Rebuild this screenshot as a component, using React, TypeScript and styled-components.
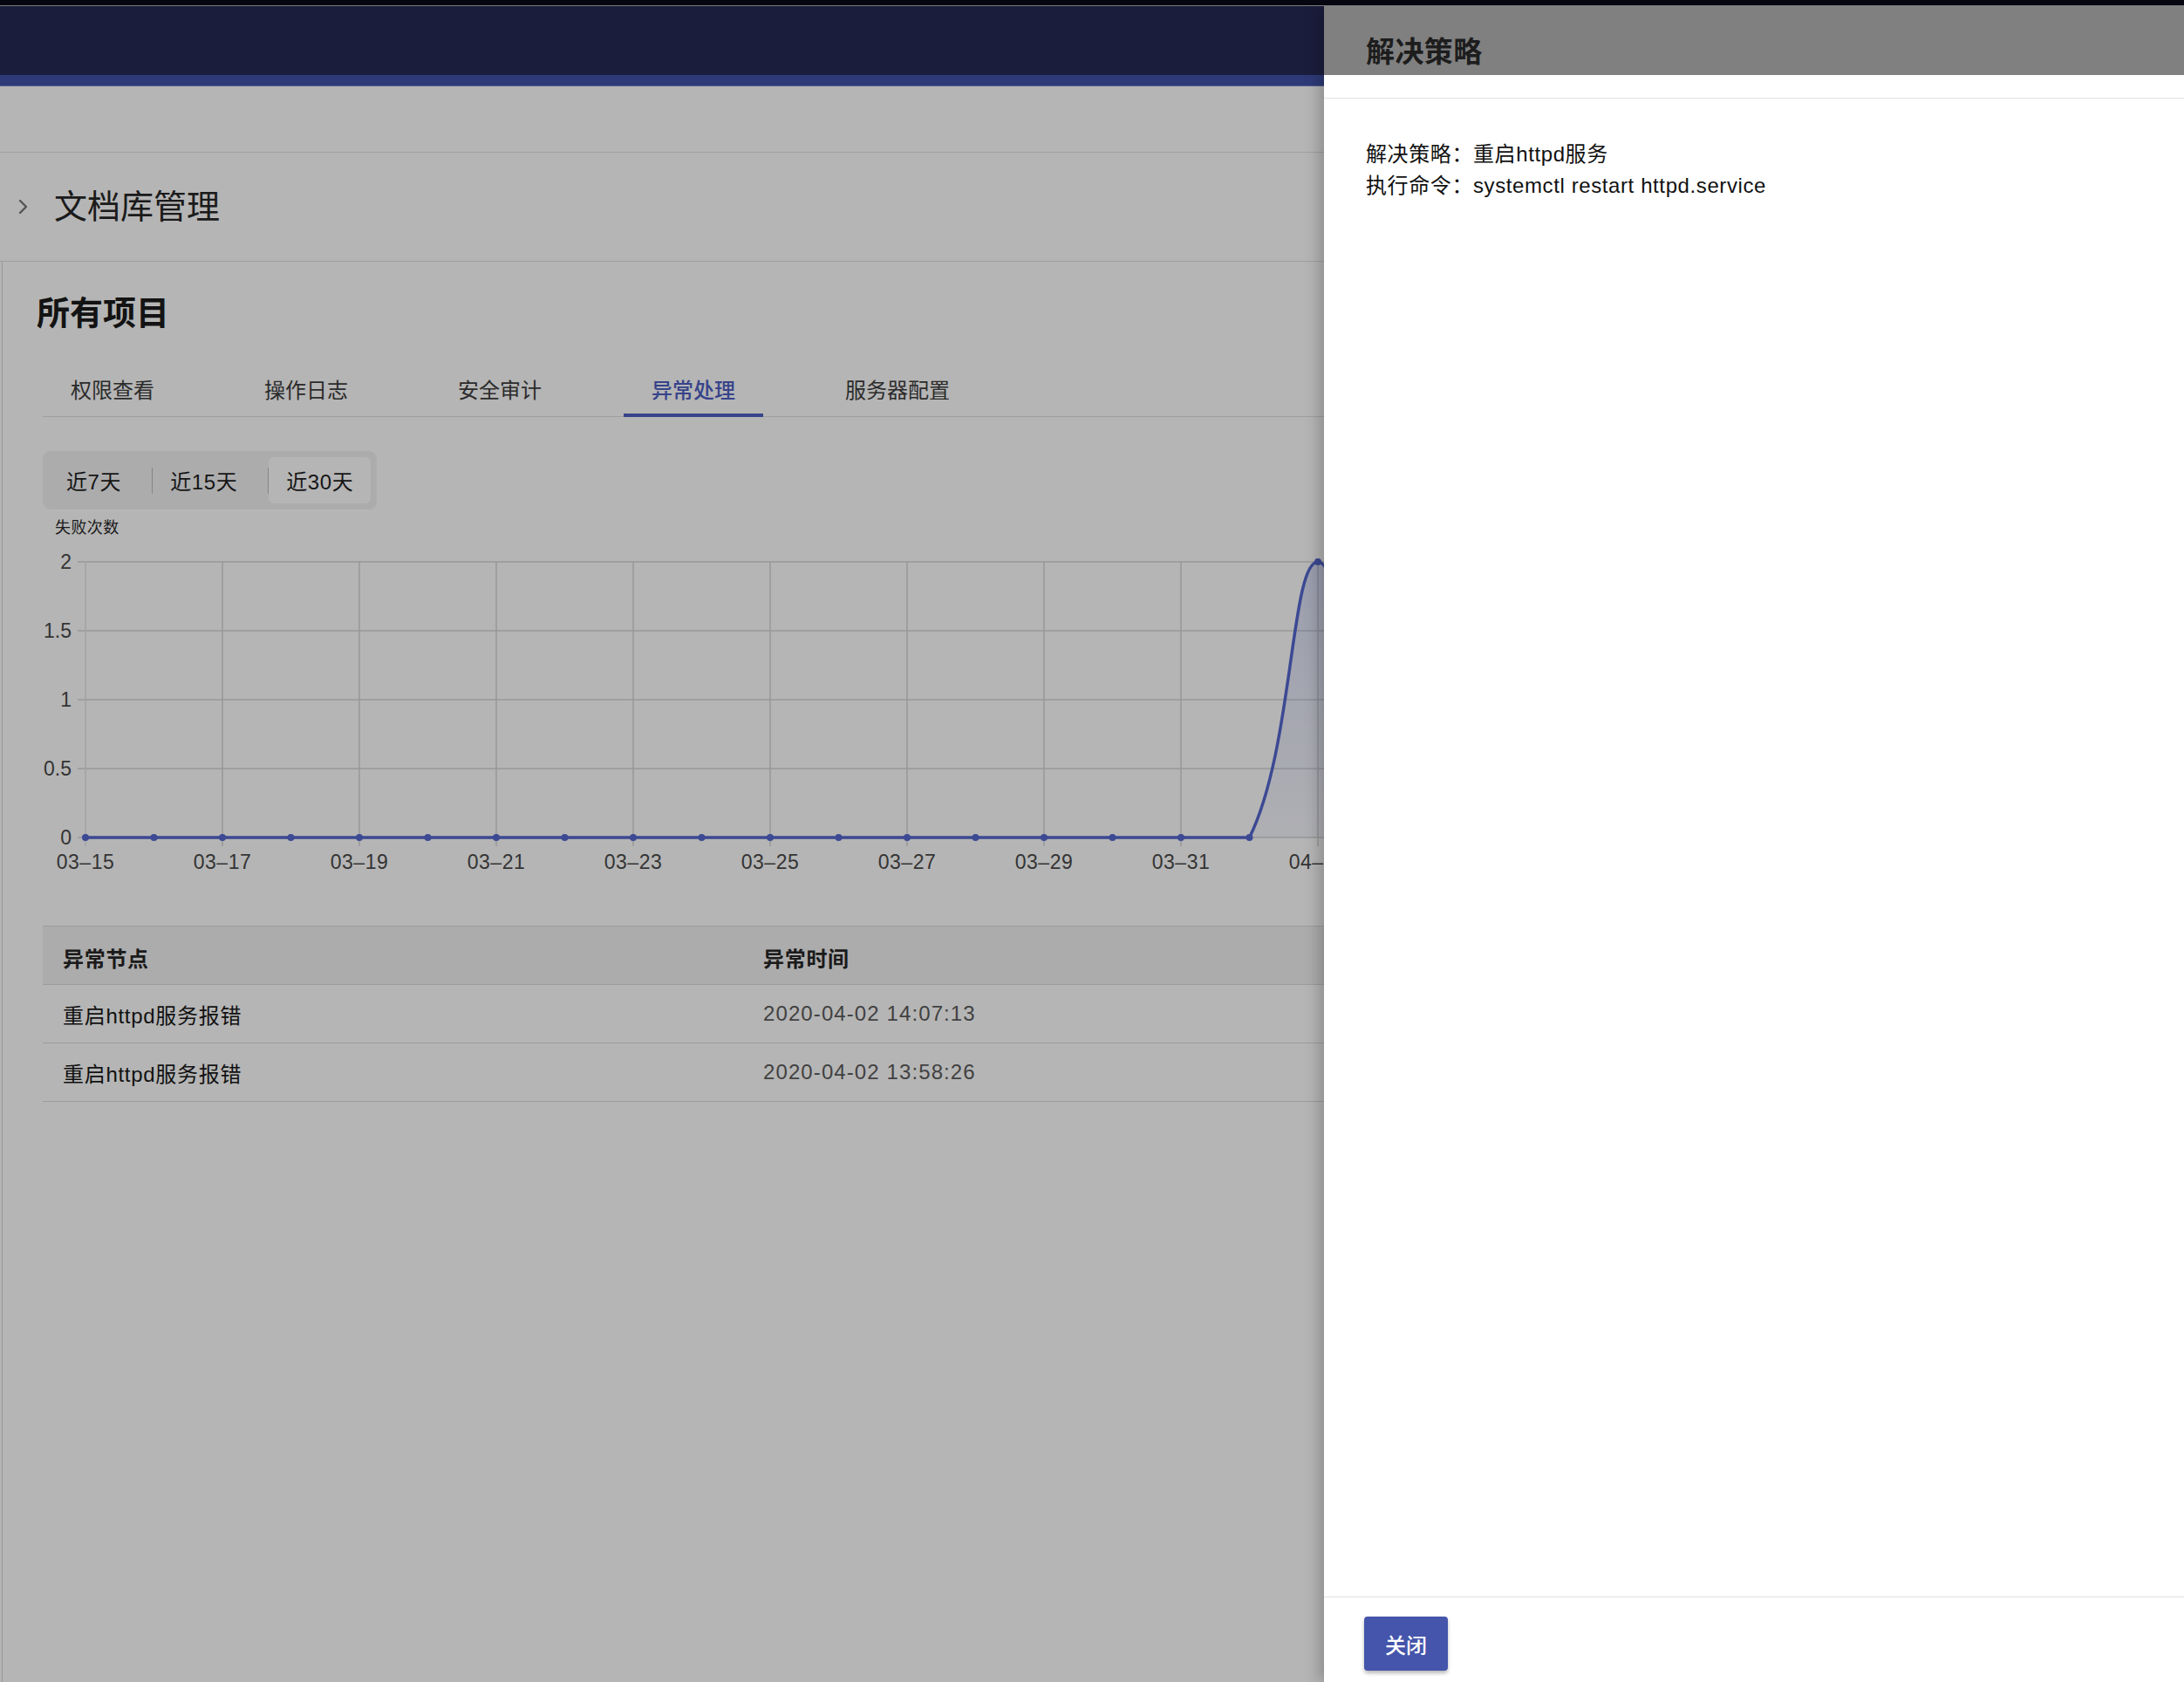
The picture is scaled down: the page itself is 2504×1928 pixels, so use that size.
import React from "react";
import styled, { createGlobalStyle } from "styled-components";

const GlobalStyle = createGlobalStyle`
  html, body { margin: 0; padding: 0; background: #ffffff; }
  body { font-family: "Liberation Sans", "Noto Sans CJK SC", sans-serif; color: #222; }
  * { box-sizing: border-box; }
`;

const FONT = `"Liberation Sans", "Noto Sans CJK SC", sans-serif`;

const Screen = styled.div`
  width: 2504px;
  height: 1928px;
  overflow: hidden;
  display: flex;
  flex-direction: column;
  background: #fff;
`;

const TopStrip = styled.div`
  flex: none;
  height: 7px;
  background: #05060f;
  border-bottom: 1px solid #7a7a7a;
`;

const Viewport = styled.div`
  position: relative;
  flex: 1;
  overflow: hidden;
`;

const Page = styled.div`
  display: flex;
  flex-direction: column;
  height: 100%;
  background: #fff;
`;

const AppBar = styled.header`
  flex: none;
  height: 79px;
  background: #262956;
`;

const AppBarBand = styled.div`
  flex: none;
  height: 13px;
  background: #4252a9;
  border-bottom: 1px solid #7d87c9;
`;

const Breadcrumb = styled.div`
  flex: none;
  height: 76px;
  border-bottom: 1px solid #e0e0e0;
`;

const TitleSection = styled.div`
  flex: none;
  height: 125px;
  border-bottom: 1px solid #e0e0e0;
  display: flex;
  align-items: center;
  gap: 28px;
  padding-left: 20px;
`;

const PageTitle = styled.h1`
  margin: 0;
  font-size: 38px;
  font-weight: 400;
  line-height: 46px;
  color: #262626;
`;

const Content = styled.main`
  flex: 1;
  margin-left: 2px;
  border-left: 1px solid #d6d6d6;
  padding: 37px 46px 0 46px;
  display: flex;
  flex-direction: column;
`;

const SectionTitle = styled.h2`
  margin: 0 0 0 -7px;
  font-size: 38px;
  font-weight: 700;
  line-height: 44px;
  color: #1c1c1c;
`;

const TabBar = styled.nav`
  margin-top: 36px;
  display: flex;
  gap: 62px;
  border-bottom: 1px solid #e0e0e0;
  height: 61px;
`;

const Tab = styled.div<{ $active?: boolean }>`
  height: 61px;
  margin-bottom: -1px;
  padding: 0 32px;
  display: flex;
  align-items: center;
  justify-content: center;
  font-size: 24px;
  color: ${(p) => (p.$active ? "#4f5fc4" : "#3d3d3d")};
  font-weight: ${(p) => (p.$active ? 500 : 400)};
  border-bottom: 4px solid ${(p) => (p.$active ? "#4f5fc4" : "transparent")};
  white-space: nowrap;
`;

const Segmented = styled.div`
  margin-top: 39px;
  align-self: flex-start;
  height: 67px;
  padding: 7px;
  display: flex;
  align-items: center;
  background: #f2f2f4;
  border-radius: 9px;
`;

const Segment = styled.div<{ $active?: boolean }>`
  height: 53px;
  padding: 0 20px;
  display: flex;
  align-items: center;
  font-size: 24px;
  letter-spacing: 0.6px;
  color: #1e1e1e;
  border-radius: 6px;
  background: ${(p) => (p.$active ? "#ffffff" : "transparent")};
`;

const SegDivider = styled.span`
  width: 1px;
  height: 30px;
  margin-left: 15px;
  background: #bdbdc2;
`;

const AxisTitle = styled.div`
  margin: 10px 0 0 14px;
  font-size: 18px;
  line-height: 22px;
  letter-spacing: 0.4px;
  color: #2a2a2a;
`;

const ChartSvg = styled.svg`
  display: block;
  overflow: visible;
`;

const Table = styled.div`
  margin-top: 45px;
  display: flex;
  flex-direction: column;
  border-top: 1px solid #dcdcdc;
`;

const Row = styled.div<{ $head?: boolean }>`
  display: grid;
  grid-template-columns: repeat(3, 1fr);
  align-items: center;
  height: 67px;
  padding-top: ${(p) => (p.$head ? "4px" : "0")};
  background: ${(p) => (p.$head ? "#f3f3f3" : "transparent")};
  border-bottom: 1px solid #dcdcdc;
`;

const Cell = styled.div<{ $head?: boolean; $muted?: boolean }>`
  padding-left: 23px;
  font-size: 24px;
  letter-spacing: ${(p) => (p.$muted ? "1.1px" : "0.7px")};
  font-weight: ${(p) => (p.$head ? 700 : 400)};
  color: ${(p) => (p.$head ? "#262626" : p.$muted ? "#5c5c5c" : "#191919")};
  white-space: nowrap;
`;

const Overlay = styled.div`
  position: absolute;
  inset: 0;
  background: rgba(0, 0, 0, 0.29);
`;

const Drawer = styled.aside`
  position: absolute;
  top: 0;
  right: 0;
  bottom: 0;
  width: 986px;
  background: #fff;
  display: flex;
  flex-direction: column;
  box-shadow: -6px 0 16px rgba(0, 0, 0, 0.22);
`;

const DrawerHeader = styled.div`
  flex: none;
  height: 106px;
  padding-left: 48px;
  display: flex;
  align-items: center;
  background: linear-gradient(#808080 0 79px, #ffffff 79px 100%);
  border-bottom: 1px solid #e2e2e2;
`;

const DrawerTitle = styled.h3`
  margin: 0;
  font-size: 33px;
  font-weight: 600;
  line-height: 40px;
  letter-spacing: 0.4px;
  color: #1d1d1d;
`;

const DrawerBody = styled.div`
  flex: 1;
  padding: 46px 48px;
`;

const InfoLine = styled.p`
  margin: 0;
  font-size: 24px;
  line-height: 36px;
  letter-spacing: 0.6px;
  color: #111;
`;

const DrawerFooter = styled.div`
  flex: none;
  height: 98px;
  padding: 22px 46px;
  border-top: 1px solid #e0e0e0;
`;

const PrimaryButton = styled.button`
  width: 96px;
  height: 62px;
  border: none;
  border-radius: 4px;
  background: #4455ab;
  color: #fff;
  font-family: ${FONT};
  font-size: 24px;
  font-weight: 500;
  box-shadow: 0 3px 4px rgba(0, 0, 0, 0.28);
  cursor: pointer;
`;

const Chevron = () => (
  <svg width="14" height="18" viewBox="0 0 14 18">
    <polyline points="3,2 10,9 3,16" fill="none" stroke="#777" strokeWidth="2.4" strokeLinecap="round" strokeLinejoin="round" />
  </svg>
);

const tabs = ["权限查看", "操作日志", "安全审计", "异常处理", "服务器配置"];

const dates: string[] = [];
for (let i = 0; i < 30; i++) {
  if (i <= 16) dates.push(`03-${String(15 + i).padStart(2, "0")}`);
  else dates.push(`04-${String(i - 16).padStart(2, "0")}`);
}
const values = dates.map((_, i) => (i === 18 ? 2 : 0));

const LEFT = 49;
const STEP = 78.5;
const TOP = 28;
const BOTTOM = 344;
const X = (i: number) => LEFT + STEP * i;
const Y = (v: number) => BOTTOM - (v / 2) * (BOTTOM - TOP);
const LINE = "#5567cf";

function buildPath() {
  const pts = values.map((v, i) => ({ x: X(i), y: Y(v) }));
  const t = 0.4;
  const cps = pts.map((p, i) => {
    const prev = pts[i - 1] || p;
    const next = pts[i + 1] || p;
    const d01 = Math.hypot(p.x - prev.x, p.y - prev.y);
    const d12 = Math.hypot(next.x - p.x, next.y - p.y);
    const s = d01 + d12 || 1;
    const fa = (t * d01) / s;
    const fb = (t * d12) / s;
    const clampY = (y: number) => Math.min(BOTTOM, Math.max(TOP, y));
    return {
      inX: p.x - fa * (next.x - prev.x),
      inY: clampY(p.y - fa * (next.y - prev.y)),
      outX: p.x + fb * (next.x - prev.x),
      outY: clampY(p.y + fb * (next.y - prev.y)),
    };
  });
  let d = `M${pts[0].x},${pts[0].y}`;
  for (let i = 1; i < pts.length; i++) {
    const a = cps[i - 1];
    const b = cps[i];
    d += ` C${a.outX.toFixed(1)},${a.outY.toFixed(1)} ${b.inX.toFixed(1)},${b.inY.toFixed(1)} ${pts[i].x},${pts[i].y}`;
  }
  return { d, last: pts[pts.length - 1].x, first: pts[0].x };
}

const Chart = () => {
  const { d, first, last } = buildPath();
  const yTicks = [0, 0.5, 1, 1.5, 2];
  return (
    <ChartSvg width="2409" height="400" viewBox="0 0 2409 400">
      <defs>
        <linearGradient id="areaFill" x1="0" y1="0" x2="0" y2="1">
          <stop offset="0" stopColor={LINE} stopOpacity="0.22" />
          <stop offset="1" stopColor={LINE} stopOpacity="0.05" />
        </linearGradient>
      </defs>
      {yTicks.map((v) => (
        <g key={v}>
          <line x1={LEFT - 9} x2={X(29)} y1={Y(v)} y2={Y(v)} stroke="#d6d6d6" strokeWidth="1.5" />
          <text x={LEFT - 16} y={Y(v) + 8} textAnchor="end" fontSize="23" fill="#4a4a4a" fontFamily={FONT}>
            {v}
          </text>
        </g>
      ))}
      {dates.map((label, i) =>
        i % 2 === 0 ? (
          <g key={label}>
            <line x1={X(i)} x2={X(i)} y1={TOP} y2={BOTTOM + 10} stroke={i === 0 ? "#e4e4e4" : "#d6d6d6"} strokeWidth="1.5" />
            <text x={X(i)} y={380} textAnchor="middle" fontSize="23" letterSpacing="0.5" fill="#4a4a4a" fontFamily={FONT}>
              {label.replace("-", "–")}
            </text>
          </g>
        ) : null
      )}
      <path d={`${d} L${last},${BOTTOM} L${first},${BOTTOM} Z`} fill="url(#areaFill)" />
      <path d={d} fill="none" stroke={LINE} strokeWidth="3.5" />
      {values.map((v, i) => (
        <circle key={i} cx={X(i)} cy={Y(v)} r="4" fill={LINE} />
      ))}
    </ChartSvg>
  );
};

const rows = [
  { node: "重启httpd服务报错", time: "2020-04-02 14:07:13" },
  { node: "重启httpd服务报错", time: "2020-04-02 13:58:26" },
];

export default function App() {
  return (
    <>
      <GlobalStyle />
      <Screen>
        <TopStrip />
        <Viewport>
          <Page>
            <AppBar />
            <AppBarBand />
            <Breadcrumb />
            <TitleSection>
              <Chevron />
              <PageTitle>文档库管理</PageTitle>
            </TitleSection>
            <Content>
              <SectionTitle>所有项目</SectionTitle>
              <TabBar>
                {tabs.map((t) => (
                  <Tab key={t} $active={t === "异常处理"}>
                    {t}
                  </Tab>
                ))}
              </TabBar>
              <Segmented>
                <Segment>近7天</Segment>
                <SegDivider />
                <Segment>近15天</Segment>
                <SegDivider />
                <Segment $active>近30天</Segment>
              </Segmented>
              <AxisTitle>失败次数</AxisTitle>
              <Chart />
              <Table>
                <Row $head>
                  <Cell $head>异常节点</Cell>
                  <Cell $head>异常时间</Cell>
                  <Cell $head>操作</Cell>
                </Row>
                {rows.map((r, i) => (
                  <Row key={i}>
                    <Cell>{r.node}</Cell>
                    <Cell $muted>{r.time}</Cell>
                    <Cell>解决策略</Cell>
                  </Row>
                ))}
              </Table>
            </Content>
          </Page>
          <Overlay />
          <Drawer>
            <DrawerHeader>
              <DrawerTitle>解决策略</DrawerTitle>
            </DrawerHeader>
            <DrawerBody>
              <InfoLine>解决策略：重启httpd服务</InfoLine>
              <InfoLine>执行命令：systemctl restart httpd.service</InfoLine>
            </DrawerBody>
            <DrawerFooter>
              <PrimaryButton>关闭</PrimaryButton>
            </DrawerFooter>
          </Drawer>
        </Viewport>
      </Screen>
    </>
  );
}
